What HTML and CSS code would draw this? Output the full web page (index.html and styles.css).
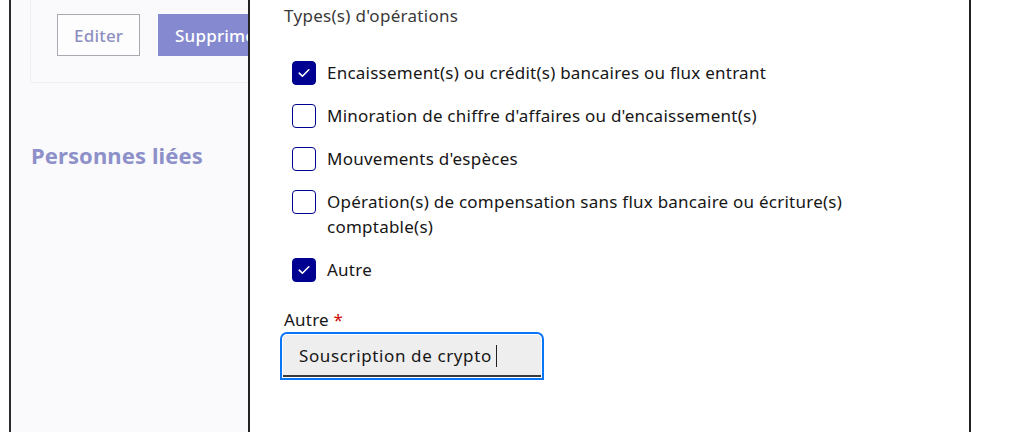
FILE: index.html
```html
<!DOCTYPE html>
<html lang="fr">
<head>
<meta charset="utf-8">
<title>Types d'opérations</title>
<link rel="stylesheet" href="styles.css">
</head>
<body>
<div class="frame">
  <div class="gutter"></div>
  <div class="page">
    <div class="card">
      <div class="actions">
        <button class="btn btn-secondary">Editer</button>
        <button class="btn btn-primary">Supprimer</button>
      </div>
    </div>
    <h2 class="page-title">Personnes liées</h2>
  </div>
  <div class="modal">
    <fieldset class="group">
      <legend class="legend">Types(s) d'opérations</legend>
      <div class="options">
        <label class="option"><span class="box checked"><svg viewBox="0 0 24 24" width="24" height="24"><path d="M7.2 12.2 L10.4 15.2 L16.8 8.8" fill="none" stroke="#fff" stroke-width="1.6" stroke-linecap="round" stroke-linejoin="round"/></svg></span><span class="text">Encaissement(s) ou crédit(s) bancaires ou flux entrant</span></label>
        <label class="option"><span class="box"></span><span class="text">Minoration de chiffre d'affaires ou d'encaissement(s)</span></label>
        <label class="option"><span class="box"></span><span class="text">Mouvements d'espèces</span></label>
        <label class="option"><span class="box"></span><span class="text">Opération(s) de compensation sans flux bancaire ou écriture(s) comptable(s)</span></label>
        <label class="option"><span class="box checked"><svg viewBox="0 0 24 24" width="24" height="24"><path d="M7.2 12.2 L10.4 15.2 L16.8 8.8" fill="none" stroke="#fff" stroke-width="1.6" stroke-linecap="round" stroke-linejoin="round"/></svg></span><span class="text">Autre</span></label>
      </div>
    </fieldset>
    <div class="field">
      <label class="field-label">Autre <span class="req">*</span></label>
      <div class="input">Souscription de crypto<span class="caret"></span></div>
    </div>
  </div>
  <div class="outside"></div>
</div>
</body>
</html>
```

FILE: styles.css
```css
* { box-sizing: border-box; }
html, body { margin: 0; padding: 0; }
body {
  width: 1028px;
  height: 432px;
  overflow: hidden;
  background: #ffffff;
  font-family: "Noto Sans", "Open Sans", sans-serif;
  color: #161616;
}
.frame {
  display: flex;
  height: 432px;
}
.gutter {
  width: 9px;
  flex: none;
  background: #ffffff;
}
.page {
  width: 239px;
  flex: none;
  border-left: 2px solid #2a2a2a;
  background: #fafafc;
  overflow: hidden;
}
.card {
  margin-left: 19px;
  width: 260px;
  height: 83px;
  border: 1px solid #efeff3;
  border-top: none;
  padding: 14px 0 0 26px;
}
.actions {
  display: flex;
  gap: 18px;
}
.btn {
  font-family: inherit;
  font-size: 17px;
  font-weight: 500;
  letter-spacing: 0.2px;
  height: 42px;
  padding: 0 16px;
  border-radius: 0;
  white-space: nowrap;
}
.btn-secondary {
  width: 83px;
  background: #fdfdfe;
  border: 1px solid #a9a9b2;
  color: #8e90c2;
}
.btn-primary {
  background: #8589cf;
  border: none;
  color: #ffffff;
  padding: 0 17px;
}
.page-title {
  margin: 58px 0 0 20px;
  font-size: 22px;
  font-weight: 700;
  letter-spacing: 0.1px;
  line-height: 28px;
  color: #8d90c9;
}
.modal {
  width: 723px;
  flex: none;
  border-left: 2px solid #222222;
  border-right: 2px solid #222222;
  background: #ffffff;
  padding: 4px 0 0 34px;
}
.group {
  border: none;
  margin: 0;
  padding: 0;
}
.legend {
  padding: 0;
  font-size: 17px;
  letter-spacing: 0.3px;
  line-height: 24px;
  color: #3a3a3a;
}
.options {
  display: flex;
  flex-direction: column;
  gap: 19px;
  margin-top: 33px;
  padding-left: 8px;
}
.option {
  display: flex;
  align-items: flex-start;
  gap: 11px;
  font-size: 17px;
  letter-spacing: 0.24px;
  line-height: 25px;
}
.box {
  width: 24px;
  height: 24px;
  flex: none;
  border: 1px solid #000091;
  border-radius: 4px;
  background: #ffffff;
  display: flex;
}
.box.checked {
  background: #000091;
  border-color: #000091;
}
.box svg { display: block; margin: -1px; }
.text {
  width: 560px;
  margin-top: -1px;
}
.field {
  margin-top: 26px;
  display: flex;
  flex-direction: column;
}
.field-label {
  font-size: 17px;
  letter-spacing: 0.22px;
  line-height: 24px;
  color: #161616;
}
.req { color: #ce0500; }
.input {
  margin-top: 3px;
  margin-left: -1px;
  width: 258px;
  height: 42px;
  background: #eeeeee;
  border-radius: 4px 4px 0 0;
  box-shadow: inset 0 -2px 0 0 #3a3a3a;
  outline: 2px solid #0a76f6;
  outline-offset: 1px;
  padding: 0 16px;
  font-size: 17px;
  letter-spacing: 0.62px;
  line-height: 42px;
  color: #161616;
  display: flex;
  align-items: center;
}
.caret {
  display: inline-block;
  width: 1px;
  height: 22px;
  background: #222;
  margin-left: 4px;
}
.outside {
  flex: 1;
  background: #ffffff;
}
```
